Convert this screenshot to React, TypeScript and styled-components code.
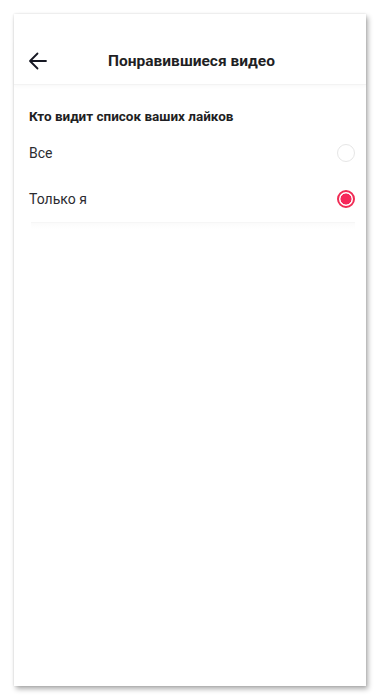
import React, { useState } from 'react';
import styled, { createGlobalStyle } from 'styled-components';

const GlobalStyle = createGlobalStyle`
  html, body {
    margin: 0;
    padding: 0;
    background: #ffffff;
  }
  body {
    font-family: Roboto, "Liberation Sans", Arial, sans-serif;
    color: #161823;
  }
`;

interface Option {
  id: string;
  label: string;
}

const OPTIONS: Option[] = [
  { id: 'all', label: 'Все' },
  { id: 'me', label: 'Только я' },
];

export default function App() {
  const [selected, setSelected] = useState('me');

  return (
    <Page>
      <GlobalStyle />
      <Screen>
        <Header>
          <BackButton aria-label="Назад">
            <svg width="20" height="20" viewBox="0 0 20 20" fill="none">
              <path
                d="M18 10H2.5M9.5 2.5L2 10l7.5 7.5"
                stroke="#161823"
                strokeWidth="1.8"
                strokeLinecap="round"
                strokeLinejoin="round"
              />
            </svg>
          </BackButton>
          <Title>Понравившиеся видео</Title>
        </Header>
        <Section>
          <SectionTitle>Кто видит список ваших лайков</SectionTitle>
          {OPTIONS.map((option) => (
            <Row key={option.id} onClick={() => setSelected(option.id)}>
              <RowLabel>{option.label}</RowLabel>
              <Radio $checked={selected === option.id} />
            </Row>
          ))}
          <SectionEnd />
        </Section>
      </Screen>
    </Page>
  );
}

const Page = styled.div`
  padding: 14px;
  width: 380px;
  height: 700px;
  box-sizing: border-box;
`;

const Screen = styled.div`
  width: 352px;
  height: 672px;
  padding-top: 24px;
  box-sizing: border-box;
  background: #ffffff;
  box-shadow: 2px 3px 5px rgba(0, 0, 0, 0.32), 0 0 2px rgba(0, 0, 0, 0.12);
  display: flex;
  flex-direction: column;
`;

const Header = styled.header`
  position: relative;
  height: 46px;
  display: flex;
  align-items: center;
  justify-content: center;
  border-bottom: 1px solid #f3f3f3;
  box-shadow: 0 2px 3px rgba(0, 0, 0, 0.025);
`;

const BackButton = styled.button`
  position: absolute;
  left: 12px;
  top: 50%;
  transform: translateY(-50%);
  width: 24px;
  height: 24px;
  padding: 0;
  border: none;
  background: none;
  display: flex;
  align-items: center;
  justify-content: center;
`;

const Title = styled.h1`
  margin: 0 0 0 3px;
  font-size: 15.5px;
  font-weight: 700;
  color: #1f1f24;
`;

const Section = styled.section`
  padding: 21px 11px 0 15px;
  display: flex;
  flex-direction: column;
`;

const SectionTitle = styled.h2`
  margin: 0 0 4px;
  height: 20px;
  line-height: 20px;
  font-size: 13.5px;
  font-weight: 700;
  color: #1f1f24;
`;

const Row = styled.div`
  height: 46px;
  display: flex;
  align-items: center;
  justify-content: space-between;
  cursor: pointer;
`;

const RowLabel = styled.span`
  font-size: 14px;
  color: #2b2b30;
`;

const Radio = styled.span<{ $checked: boolean }>`
  width: 18px;
  height: 18px;
  box-sizing: border-box;
  border-radius: 50%;
  border: ${({ $checked }) => ($checked ? '2px solid #f02c55' : '1.5px solid #e6e6e6')};
  background: ${({ $checked }) =>
    $checked ? 'radial-gradient(circle, #f6285a 0 5.2px, #ffffff 5.8px)' : '#ffffff'};
`;

const SectionEnd = styled.div`
  margin: 0 0 0 2px;
  height: 6px;
  border-top: 1px solid #f6f6f6;
  background: linear-gradient(#fbfbfb, #ffffff);
`;
